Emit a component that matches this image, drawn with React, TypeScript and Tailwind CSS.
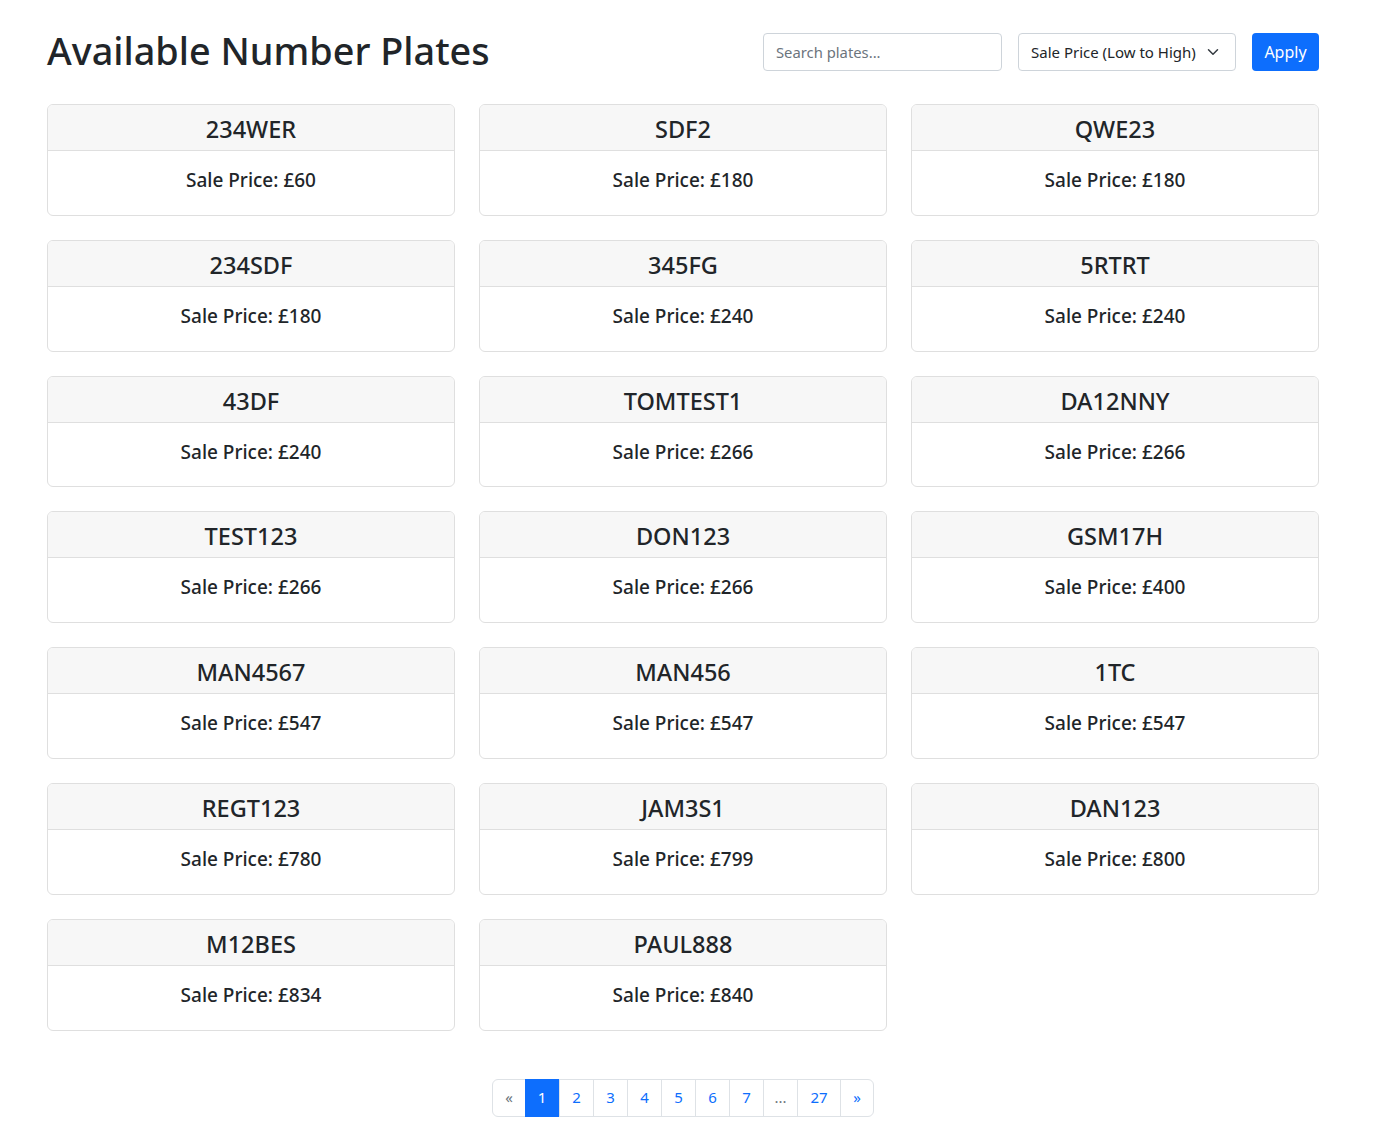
const plates: [string, number][] = [
  ['234WER', 60],
  ['SDF2', 180],
  ['QWE23', 180],
  ['234SDF', 180],
  ['345FG', 240],
  ['5RTRT', 240],
  ['43DF', 240],
  ['TOMTEST1', 266],
  ['DA12NNY', 266],
  ['TEST123', 266],
  ['DON123', 266],
  ['GSM17H', 400],
  ['MAN4567', 547],
  ['MAN456', 547],
  ['1TC', 547],
  ['REGT123', 780],
  ['JAM3S1', 799],
  ['DAN123', 800],
  ['M12BES', 834],
  ['PAUL888', 840],
];

const pages = ['1', '2', '3', '4', '5', '6', '7', '...', '27'];

function PlateCard({ reg, price }: { reg: string; price: number }) {
  return (
    <div className="rounded-[6px] border border-[#dfdfdf] bg-white">
      <div className="flex h-[46px] items-center justify-center border-b border-[#dfdfdf] bg-[#f7f7f7] pt-[3px] rounded-t-[5px]">
        <h4 className="text-[23.5px] font-medium leading-[1.2] text-[#212529]">{reg}</h4>
      </div>
      <div className="flex h-[63.8px] items-start justify-center pt-[18px]">
        <h5 className="text-[19px] font-medium leading-[1.2] text-[#212529]">Sale Price: £{price}</h5>
      </div>
    </div>
  );
}

export default function App() {
  return (
    <div
      className="min-h-screen bg-white text-[#212529]"
      style={{ fontFamily: "'Segoe UI', 'Noto Sans', 'Open Sans', sans-serif" }}
    >
      <div className="mx-[47px] w-[1272px]">
        <div className="flex h-[104px] items-start justify-between">
          <h1 className="pt-[28px] text-[37.8px] font-medium leading-[1.2]">Available Number Plates</h1>
          <div className="flex items-center gap-[16px] pt-[33px]">
            <input
              type="text"
              placeholder="Search plates..."
              className="h-[38px] w-[239px] rounded-[4px] border border-[#ced4da] px-[12px] text-[14.8px] text-[#212529] placeholder:text-[#6c757d] outline-none"
            />
            <div className="flex h-[38px] w-[218px] items-center justify-between rounded-[4px] border border-[#ced4da] pl-[12px] pr-[16px] text-[15px]">
              <span>Sale Price (Low to High)</span>
              <svg width="12" height="12" viewBox="0 0 16 16" fill="none" stroke="#343a40" strokeWidth="2" strokeLinecap="round" strokeLinejoin="round">
                <path d="M2 5l6 6 6-6" />
              </svg>
            </div>
            <button className="h-[38px] w-[67px] rounded-[4px] bg-[#0d6efd] text-[16px] text-white">Apply</button>
          </div>
        </div>

        <div className="grid grid-cols-3 gap-x-[24px] gap-y-[24px]">
          {plates.map(([reg, price]) => (
            <PlateCard key={reg} reg={reg} price={price} />
          ))}
        </div>

        <div className="flex justify-center pt-[48px] pb-[30px]">
          <div className="flex h-[38px] rounded-[6px] border border-[#dee2e6] text-[15px]">
            <span className="flex w-[32px] items-center justify-center text-[#6c757d]">«</span>
            {pages.map((p) => (
              <span
                key={p}
                className={
                  p === '1'
                    ? 'flex w-[34px] items-center justify-center bg-[#0d6efd] text-white -my-px'
                    : p === '...'
                      ? 'flex w-[34px] items-center justify-center border-l border-[#dee2e6] text-[#6c757d]'
                      : p === '27'
                        ? 'flex w-[43px] items-center justify-center border-l border-[#dee2e6] text-[#0d6efd]'
                        : 'flex w-[34px] items-center justify-center border-l border-[#dee2e6] text-[#0d6efd]'
                }
              >
                {p}
              </span>
            ))}
            <span className="flex w-[33px] items-center justify-center border-l border-[#dee2e6] text-[#0d6efd]">»</span>
          </div>
        </div>
      </div>
    </div>
  );
}
